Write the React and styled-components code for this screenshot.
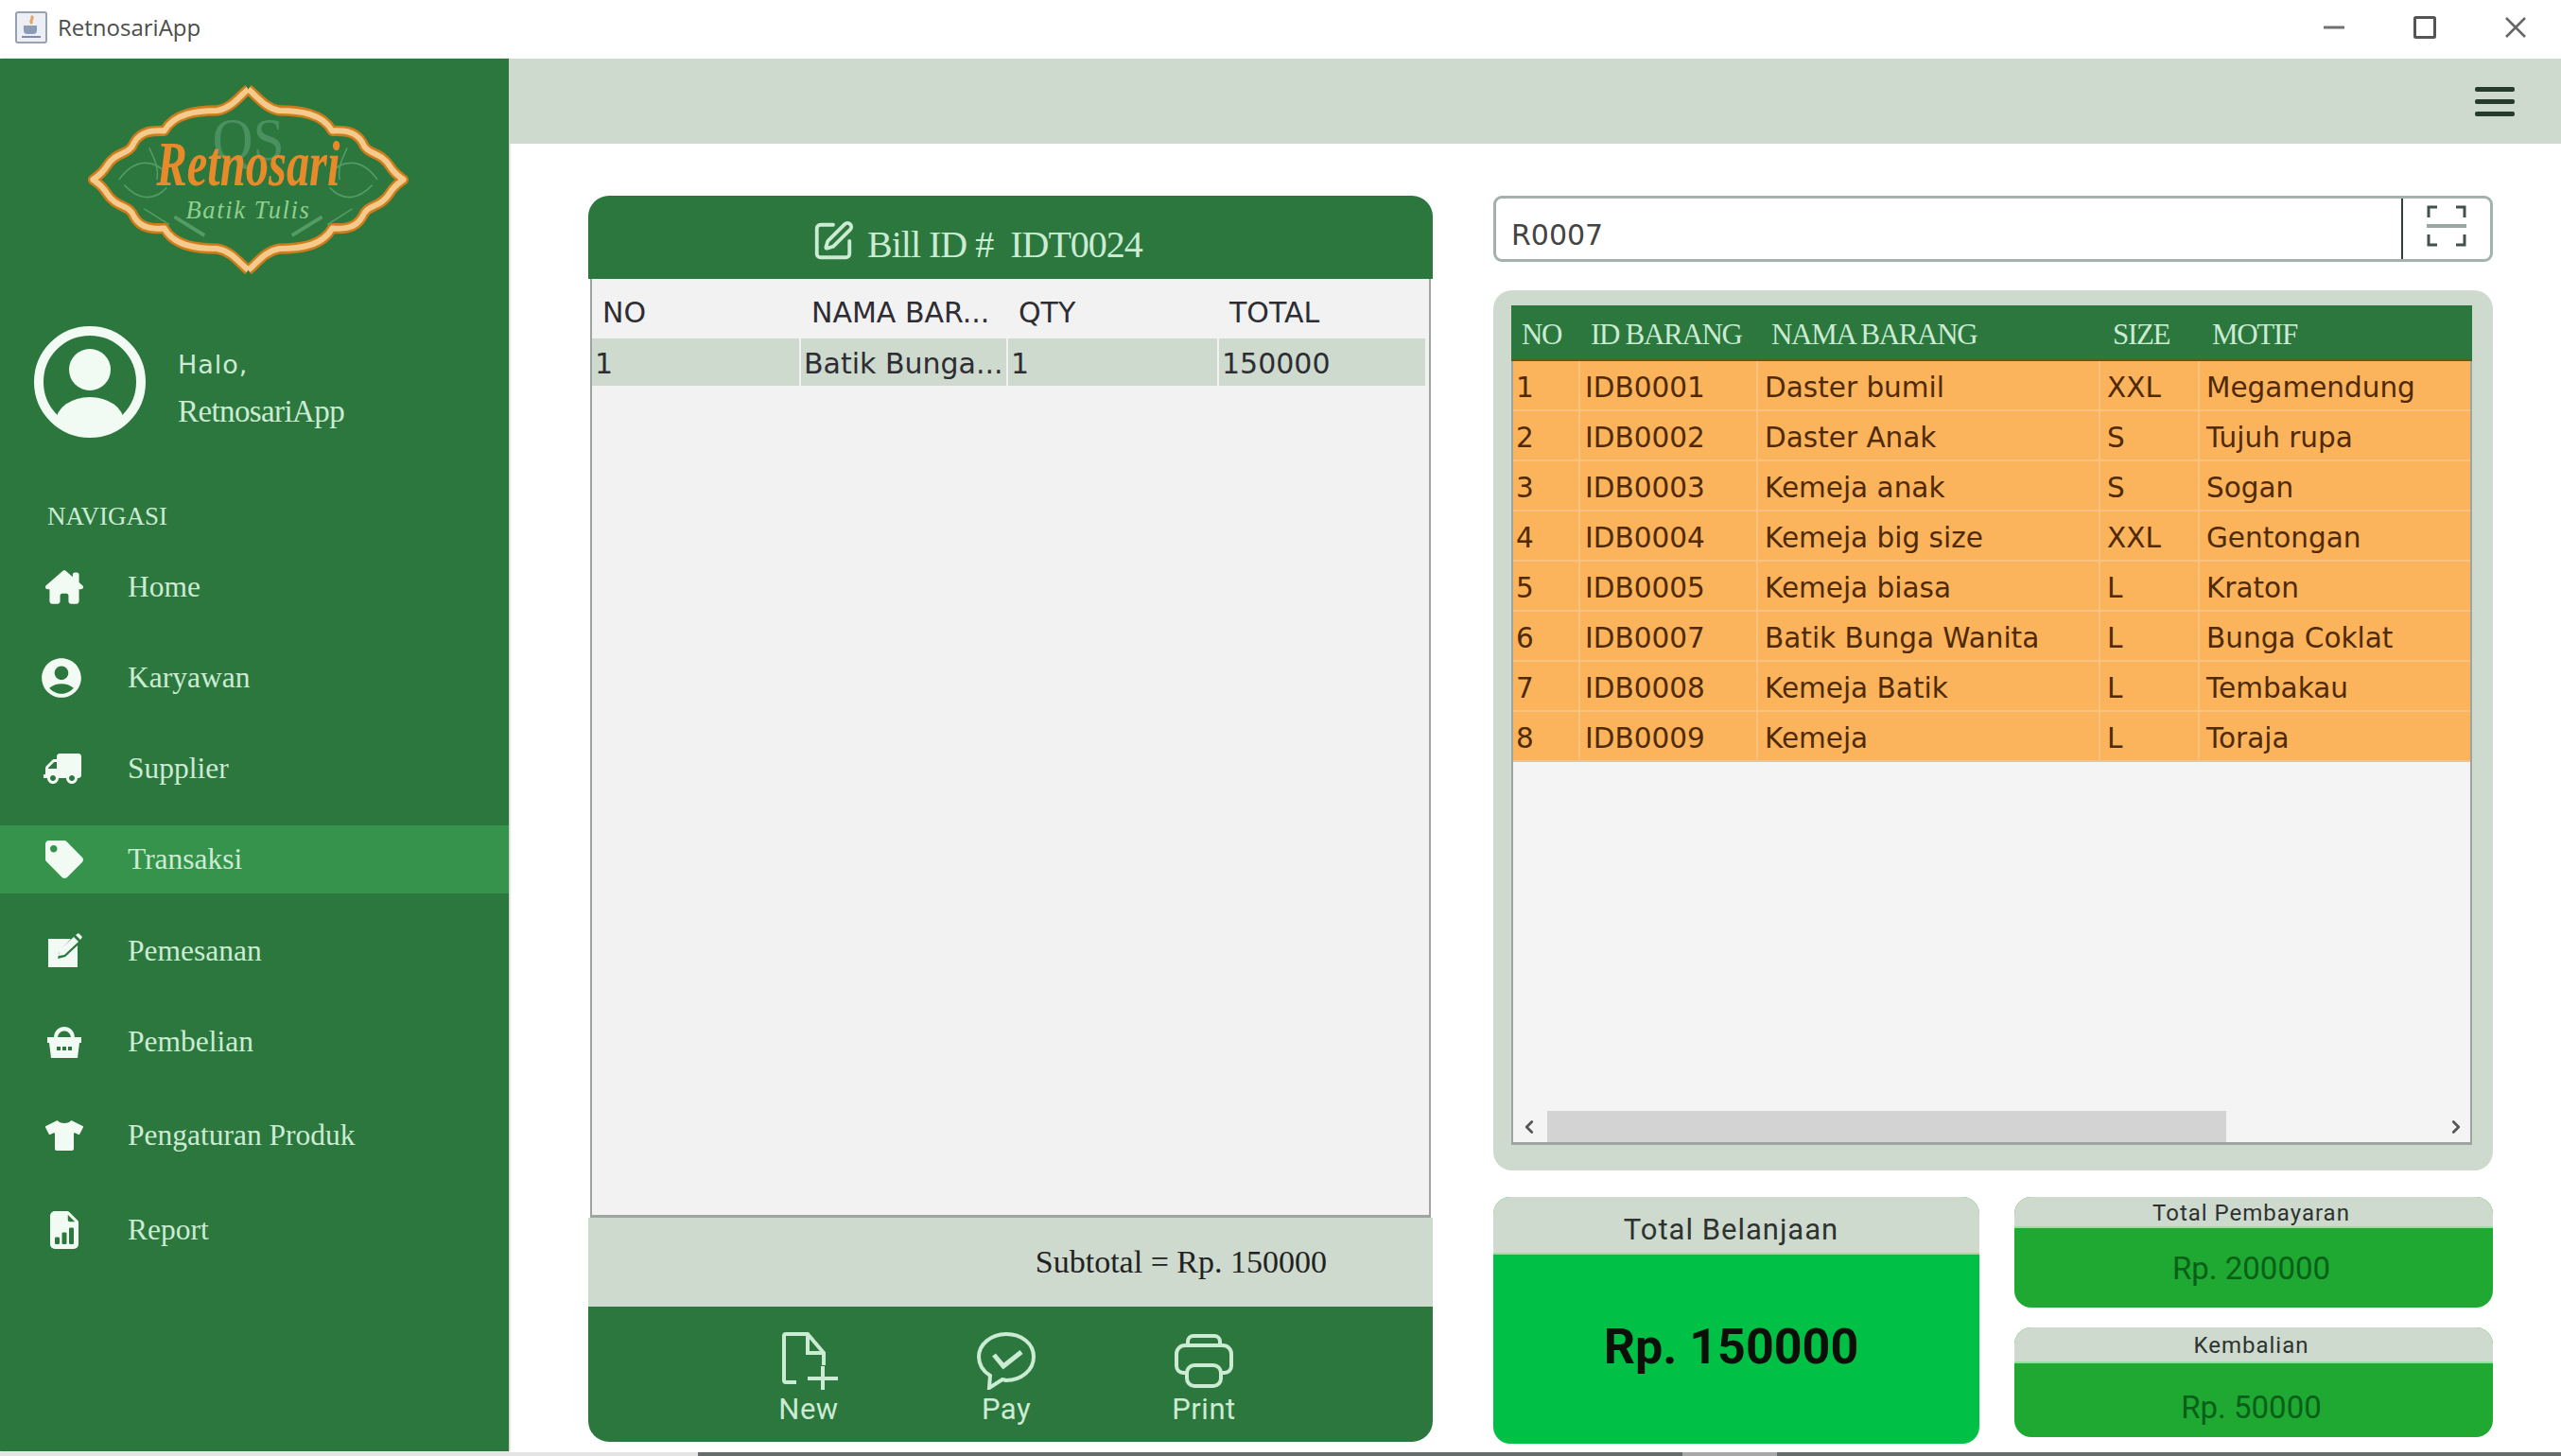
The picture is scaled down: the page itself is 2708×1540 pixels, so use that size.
import React from 'react';
import styled, { createGlobalStyle } from 'styled-components';
import { FaTruck, FaTag, FaTshirt } from 'react-icons/fa';
import { FaHouseChimney } from 'react-icons/fa6';
import { MdAccountCircle } from 'react-icons/md';
import { BsFileEarmarkBarGraphFill } from 'react-icons/bs';
import { SquarePen, ChevronLeft, ChevronRight } from 'lucide-react';

const GREEN = '#2c773e';
const SAGE = '#cddacd';
const MINT = '#cbebd2';
const SERIF = '"Liberation Serif", serif';
const TAHOMA = '"DejaVu Sans", sans-serif';
const LABEL = '"Roboto", sans-serif';

const GlobalStyle = createGlobalStyle`
  html, body { margin: 0; padding: 0; background: #fff; }
  * { box-sizing: border-box; }
`;

const Window = styled.div`
  width: 2708px;
  height: 1540px;
  display: flex;
  flex-direction: column;
  overflow: hidden;
  background: #fff;
  position: relative;
`;

const TitleBar = styled.div`
  height: 62px;
  flex: none;
  display: flex;
  align-items: center;
  padding: 0 36px 5px 16px;
  background: #fff;
`;

const AppTitle = styled.span`
  margin-left: 11px;
  flex: 1;
  font: 24px "Open Sans", sans-serif;
  color: #4c4c4c;
`;

const WinButtons = styled.div`
  display: flex;
  align-items: center;
  gap: 72px;
`;

const Body = styled.div`
  flex: 1;
  display: flex;
  min-height: 0;
`;

const Sidebar = styled.aside`
  width: 538px;
  flex: none;
  height: 1473px;
  background: ${GREEN};
  display: flex;
  flex-direction: column;
  box-shadow: 1px 0 2px rgba(0, 0, 0, 0.25);
`;

const LogoWrap = styled.div`
  padding: 28px 0 0 93px;
  height: 282px;
`;

const Profile = styled.div`
  display: flex;
  align-items: center;
  padding-left: 36px;
  gap: 34px;
  height: 120px;
`;

const ProfileText = styled.div`
  display: flex;
  flex-direction: column;
  gap: 16px;
  padding-top: 16px;
  color: ${MINT};
`;

const Hello = styled.span`
  font: 27px ${TAHOMA};
  letter-spacing: 1px;
`;

const UserName = styled.span`
  font: 33px ${SERIF};
  letter-spacing: -0.6px;
`;

const NavTitle = styled.div`
  margin: 67px 0 0 50px;
  font: 27px ${SERIF};
  color: ${MINT};
`;

const Nav = styled.nav`
  margin-top: 23px;
  display: flex;
  flex-direction: column;
`;

const NavItem = styled.div`
  height: 72px;
  margin-bottom: ${(p) => p.$gap}px;
  display: flex;
  align-items: center;
  padding-left: 48px;
  background: ${(p) => (p.$active ? '#35934c' : 'transparent')};
  color: ${MINT};
  font: 31.5px ${SERIF};

  svg {
    width: 40px;
    height: 40px;
    flex: none;
    color: #f1fbf3;
  }

  span {
    margin-left: 47px;
  }
`;

const TruckIcon = styled(FaTruck)`
  transform: scaleX(-1) translateX(2px);
`;

const AccountIcon = styled(MdAccountCircle)`
  transform: translateX(-3px) scale(1.25);
`;

const Main = styled.main`
  flex: 1;
  display: flex;
  flex-direction: column;
  min-width: 0;
`;

const TopBar = styled.div`
  height: 90px;
  flex: none;
  background: ${SAGE};
  display: flex;
  flex-direction: column;
  align-items: flex-end;
  justify-content: center;
  gap: 8px;
  padding-right: 49px;
`;

const BurgerLine = styled.i`
  display: block;
  width: 42px;
  height: 5px;
  border-radius: 2px;
  background: #263c2b;
`;

const Columns = styled.div`
  display: flex;
  padding: 55px 0 0 84px;
`;

const BillPanel = styled.section`
  width: 893px;
  height: 1318px;
  flex: none;
  display: flex;
  flex-direction: column;
`;

const BillHead = styled.header`
  height: 88px;
  flex: none;
  background: ${GREEN};
  border-radius: 22px 22px 0 0;
  display: flex;
  align-items: center;
  padding: 8px 0 0 236px;
  gap: 13px;
  color: ${MINT};
  font: 40px ${SERIF};
  letter-spacing: -1px;
  white-space: pre;

  span {
    padding-top: 6px;
  }
`;

const BillBody = styled.div`
  flex: 1;
  margin: 0 2px;
  background: #f2f2f2;
  border: solid #9ea5a0;
  border-width: 0 2px 3px;
`;

const BillRow = styled.div`
  display: grid;
  grid-template-columns: 221px 219px 223px 1fr;
  height: ${(p) => p.$h}px;
  align-items: center;
  font: 30px ${TAHOMA};
  color: #2d2d33;
`;

const BillHeader = styled(BillRow)`
  padding-top: 7px;
  span { padding-left: 11px; }
`;

const BillCell = styled.span`
  background: ${SAGE};
  height: 100%;
  display: flex;
  align-items: center;
  padding: 3px 0 0 3px;
  border-right: 2px solid #f2f2f2;
  &:last-child { border-right: 0; margin-right: 4px; }
`;

const SubtotalBar = styled.div`
  height: 94px;
  flex: none;
  background: ${SAGE};
  display: flex;
  align-items: center;
  justify-content: flex-end;
  padding-right: 112px;
  font: 34px ${SERIF};
  color: #222;
`;

const ActionBar = styled.div`
  height: 143px;
  flex: none;
  background: ${GREEN};
  border-radius: 0 0 22px 22px;
  display: flex;
  padding: 26px 0 0 188px;
  gap: 119px;
`;

const Action = styled.button`
  width: 90px;
  background: none;
  border: 0;
  padding: 0;
  display: flex;
  flex-direction: column;
  align-items: center;
  color: ${MINT};
  font: 400 31px ${LABEL};
  line-height: 36px;
  letter-spacing: 0.5px;

  svg {
    width: 64px;
    height: 62px;
    margin-bottom: 3px;
  }
`;

const RightColumn = styled.div`
  margin-left: 64px;
  width: 1057px;
  display: flex;
  flex-direction: column;
`;

const SearchBox = styled.div`
  height: 70px;
  display: flex;
  background: #fff;
  border: 3px solid #a3b3ab;
  border-radius: 9px;
`;

const SearchValue = styled.div`
  flex: 1;
  display: flex;
  align-items: center;
  padding: 13px 0 0 16px;
  font: 30px ${TAHOMA};
  color: #444;
  border-right: 2px solid #33403a;
`;

const ScanButton = styled.div`
  width: 92px;
  display: flex;
  align-items: center;
  justify-content: center;
  padding-bottom: 6px;
`;

const StockPanel = styled.section`
  margin-top: 30px;
  height: 931px;
  padding: 16px 22px 27px 19px;
  background: ${SAGE};
  border-radius: 20px;
`;

const StockTable = styled.div`
  height: 100%;
  background: #f4f4f4;
  border: solid #9ea5a0;
  border-width: 0 2px 3px;
  display: flex;
  flex-direction: column;
`;

const StockHead = styled.div`
  height: 59px;
  flex: none;
  display: grid;
  grid-template-columns: 73px 191px 361px 105px 1fr;
  align-items: center;
  margin: 0 -2px;
  padding-top: 4px;
  background: ${GREEN};
  color: ${MINT};
  font: 31px ${SERIF};
  letter-spacing: -1.3px;
  border-bottom: 2px solid #5c5a1f;
  span { padding-left: 11px; }
`;

const StockRow = styled.div`
  height: 53px;
  flex: none;
  display: grid;
  grid-template-columns: 71px 188px 362px 105px 1fr;
  background: #fbb35c;
  color: #4f2a05;
  font: 29.5px ${TAHOMA};
  border-bottom: 2px solid #f9c27f;
  span {
    display: flex;
    align-items: center;
    padding: 4px 0 0 5px;
    border-right: 2px solid #f9c27f;
    white-space: nowrap;
  }
  span:first-child { padding-left: 3px; }
  span:nth-child(n + 3) { padding-left: 7px; }
  span:last-child { border-right: 0; }
`;

const ScrollTrack = styled.div`
  margin-top: auto;
  height: 33px;
  display: flex;
  align-items: center;
  color: #555;
  padding: 0 4px 0 6px;
`;

const ScrollThumb = styled.div`
  width: 718px;
  height: 33px;
  margin: 0 auto 0 8px;
  background: #d3d3d3;
`;

const Totals = styled.div`
  margin-top: 28px;
  display: flex;
  gap: 37px;
`;

const TotalStack = styled.div`
  flex: 1;
  display: flex;
  flex-direction: column;
  gap: 21px;
`;

const Card = styled.div`
  width: ${(p) => (p.$big ? '514px' : 'auto')};
  height: ${(p) => p.$h}px;
  flex: none;
  display: flex;
  flex-direction: column;
  border-radius: 18px;
  overflow: hidden;
  background: ${(p) => (p.$big ? '#00c146' : '#1fa832')};
`;

const CardHead = styled.div`
  height: ${(p) => p.$h}px;
  flex: none;
  background: ${SAGE};
  border-bottom: 2px solid #8fe39c;
  display: flex;
  align-items: center;
  justify-content: center;
  padding: ${(p) => p.$top}px ${(p) => p.$inset}px 0 0;
  font: ${(p) => p.$size}px ${LABEL};
  letter-spacing: 1px;
  color: #2e3331;
`;

const BigAmount = styled.div`
  flex: 1;
  display: flex;
  align-items: center;
  justify-content: center;
  padding: 0 11px 6px 0;
  font: 700 52px ${LABEL};
  color: #0a0f0a;
`;

const SmallAmount = styled.div`
  flex: 1;
  display: flex;
  align-items: center;
  justify-content: center;
  padding: ${(p) => p.$top}px 5px 0 0;
  font: 33px ${LABEL};
  color: #086018;
`;

const FooterStrip = styled.div`
  position: absolute;
  left: 0;
  right: 0;
  bottom: 0;
  height: 4px;
  background: linear-gradient(
    to right,
    #e4e4e4 738px,
    #666c6b 738px,
    #666c6b 1779px,
    #a8a8a8 1779px,
    #a8a8a8 1879px,
    #666c6b 1879px
  );
`;

const EditBoxIcon = () => (
  <svg viewBox="0 0 40 40" fill="currentColor">
    <path d="M3 7h24L15 20l-2 8 8-2 13-12v23H3z" />
    <path d="M30 5l5 5-15 14-6 1 1-6z" />
    <path d="M32 3l3-2 4 4-2 3z" />
  </svg>
);

const BasketIcon = () => (
  <svg viewBox="0 0 40 40" fill="currentColor">
    <path d="M9 16c0-16 22-16 22 0h-4c0-10-14-10-14 0z" />
    <path fillRule="evenodd" d="M2 15h36v6h-2l-2 16H6L4 21H2zM12 25v4h4v-4zM18 25v4h4v-4zM24 25v4h4v-4z" />
  </svg>
);

const navItems = [
  { label: 'Home', Icon: FaHouseChimney, gap: 24 },
  { label: 'Karyawan', Icon: AccountIcon, gap: 24 },
  { label: 'Supplier', Icon: TruckIcon, gap: 24 },
  { label: 'Transaksi', Icon: FaTag, gap: 25, active: true },
  { label: 'Pemesanan', Icon: EditBoxIcon, gap: 24 },
  { label: 'Pembelian', Icon: BasketIcon, gap: 27 },
  { label: 'Pengaturan Produk', Icon: FaTshirt, gap: 28 },
  { label: 'Report', Icon: BsFileEarmarkBarGraphFill, gap: 0 },
];

const stock = [
  ['1', 'IDB0001', 'Daster bumil', 'XXL', 'Megamendung'],
  ['2', 'IDB0002', 'Daster Anak', 'S', 'Tujuh rupa'],
  ['3', 'IDB0003', 'Kemeja anak', 'S', 'Sogan'],
  ['4', 'IDB0004', 'Kemeja big size', 'XXL', 'Gentongan'],
  ['5', 'IDB0005', 'Kemeja biasa', 'L', 'Kraton'],
  ['6', 'IDB0007', 'Batik Bunga Wanita', 'L', 'Bunga Coklat'],
  ['7', 'IDB0008', 'Kemeja Batik', 'L', 'Tembakau'],
  ['8', 'IDB0009', 'Kemeja', 'L', 'Toraja'],
];

const JavaIcon = () => (
  <svg width="34" height="34" viewBox="0 0 34 34">
    <rect x="1" y="1" width="32" height="32" rx="2" fill="#eceff5" stroke="#98a2ae" strokeWidth="2" />
    <path d="M17 5c4 3-3 4 1 8" fill="none" stroke="#e8a465" strokeWidth="3" />
    <path d="M9 15h14v5a4 4 0 0 1-4 4h-6a4 4 0 0 1-4-4z" fill="#8d9cb5" />
    <path d="M7 27h20" stroke="#7c8dab" strokeWidth="2" />
  </svg>
);

const Logo = () => {
  const left =
    'M317 0 C300 12 285 35 255 40 C215 40 170 45 150 78 C135 78 105 75 90 100 C80 125 55 115 35 145 C25 160 15 165 8 170' +
    ' C15 175 25 180 35 195 C55 225 80 215 90 240 C105 265 135 262 150 262 C170 295 215 300 255 300 C285 305 300 328 317 340';
  const right =
    'M317 0 C334 12 349 35 379 40 C419 40 464 45 484 78 C499 78 529 75 544 100 C554 125 579 115 599 145 C609 160 619 165 626 170' +
    ' C619 175 609 180 599 195 C579 225 554 215 544 240 C529 265 499 262 484 262 C464 295 419 300 379 300 C349 305 334 328 317 340';
  return (
    <svg width="339" height="200" viewBox="-2 -8 638 356" preserveAspectRatio="none">
      <g fill="none" strokeLinejoin="round">
        <path d={left} stroke="#cf7d1c" strokeWidth="20" />
        <path d={right} stroke="#cf7d1c" strokeWidth="20" />
        <path d={left} stroke="#f4cb8c" strokeWidth="11" />
        <path d={right} stroke="#f4cb8c" strokeWidth="11" />
        <g stroke="#5fa470" strokeWidth="3" opacity="0.8">
          <path d="M60 170c30-40 70-40 95-10M70 180c30 30 60 30 85 5M120 110c10 20 20 40 15 60M110 225l50 30" />
          <path d="M574 170c-30-40-70-40-95-10M564 180c-30 30-60 30-85 5M514 110c-10 20-20 40-15 60M524 225l-50 30" />
          <path d="M170 240l60 35M464 240l-60 35" strokeWidth="7" />
        </g>
      </g>
      <text x="317" y="132" textAnchor="middle" fontFamily={SERIF} fontSize="112" fill="#4a9060">QS</text>
      <text x="317" y="180" textAnchor="middle" fontFamily={SERIF} fontStyle="italic" fontWeight="700" fontSize="122" textLength="365" lengthAdjust="spacingAndGlyphs" fill="#e98a2a">Retnosari</text>
      <text x="317" y="243" textAnchor="middle" fontFamily={SERIF} fontStyle="italic" fontSize="50" fill="#8fcf90" letterSpacing="3">Batik Tulis</text>
    </svg>
  );
};

const Avatar = () => (
  <svg width="118" height="120" viewBox="0 0 118 120">
    <defs>
      <clipPath id="avatarClip">
        <circle cx="59" cy="60" r="52" />
      </clipPath>
    </defs>
    <circle cx="59" cy="60" r="54" fill="none" stroke="#f1fbf3" strokeWidth="10" />
    <circle cx="59" cy="47" r="22" fill="#f1fbf3" />
    <ellipse cx="59" cy="102" rx="36" ry="26" fill="#f1fbf3" clipPath="url(#avatarClip)" />
  </svg>
);

const NewIcon = () => (
  <svg viewBox="0 0 64 62" fill="none" stroke="currentColor" strokeWidth="4">
    <path d="M19 54H8a2 2 0 0 1-2-2V5a2 2 0 0 1 2-2h23l17 20v13" />
    <path d="M31 3v20h17" />
    <path d="M47 37v25M31 50h32" />
  </svg>
);

const PayIcon = () => (
  <svg viewBox="0 0 64 62" fill="none" stroke="currentColor" strokeWidth="4">
    <path d="M32 3C16 3 3 14 3 27c0 8 4 15 12 20l-1 13 14-9c1 0 3 1 4 1 16 0 29-11 29-25S48 3 32 3z" />
    <path d="M19 25l10 12 19-15" strokeWidth="5" />
  </svg>
);

const PrintIcon = () => (
  <svg viewBox="0 0 64 62" fill="none" stroke="currentColor" strokeWidth="4">
    <path d="M13 44H10a7 7 0 0 1-7-7V24a9 9 0 0 1 9-9h40a9 9 0 0 1 9 9v13a7 7 0 0 1-7 7h-3" />
    <path d="M15 15V11a6 6 0 0 1 6-6h22a6 6 0 0 1 6 6v4" />
    <rect x="14" y="36" width="36" height="22" rx="8" />
  </svg>
);

const ScanIcon = () => (
  <svg width="42" height="46" viewBox="0 0 42 46" fill="none" stroke="#44514a" strokeWidth="3">
    <path d="M2 14V3h9M31 3h9v11M2 32v11h9M31 43h9V32" />
    <path d="M0 23h42" stroke="#9aa6a0" strokeWidth="4" />
  </svg>
);

const MinIcon = () => (
  <svg width="24" height="24" viewBox="0 0 24 24"><path d="M1 12h22" stroke="#707070" strokeWidth="3" /></svg>
);

const MaxIcon = () => (
  <svg width="24" height="24" viewBox="0 0 24 24"><rect x="1.5" y="1.5" width="21" height="21" rx="1" fill="none" stroke="#555" strokeWidth="3" /></svg>
);

const CloseIcon = () => (
  <svg width="24" height="24" viewBox="0 0 24 24"><path d="M2 2l20 20M22 2L2 22" stroke="#666" strokeWidth="2.5" /></svg>
);

const App = () => (
  <Window>
    <GlobalStyle />
    <TitleBar>
      <JavaIcon />
      <AppTitle>RetnosariApp</AppTitle>
      <WinButtons>
        <MinIcon />
        <MaxIcon />
        <CloseIcon />
      </WinButtons>
    </TitleBar>
    <Body>
      <Sidebar>
        <LogoWrap>
          <Logo />
        </LogoWrap>
        <Profile>
          <Avatar />
          <ProfileText>
            <Hello>Halo,</Hello>
            <UserName>RetnosariApp</UserName>
          </ProfileText>
        </Profile>
        <NavTitle>NAVIGASI</NavTitle>
        <Nav>
          {navItems.map(({ label, Icon, gap, active }) => (
            <NavItem key={label} $gap={gap} $active={active}>
              <Icon />
              <span>{label}</span>
            </NavItem>
          ))}
        </Nav>
      </Sidebar>
      <Main>
        <TopBar>
          <BurgerLine />
          <BurgerLine />
          <BurgerLine />
        </TopBar>
        <Columns>
          <BillPanel>
            <BillHead>
              <SquarePen size={46} strokeWidth={2} />
              <span>Bill ID #  IDT0024</span>
            </BillHead>
            <BillBody>
              <BillHeader $h={63}>
                <span>NO</span>
                <span>NAMA BAR...</span>
                <span>QTY</span>
                <span>TOTAL</span>
              </BillHeader>
              <BillRow $h={50}>
                <BillCell>1</BillCell>
                <BillCell>Batik Bunga...</BillCell>
                <BillCell>1</BillCell>
                <BillCell>150000</BillCell>
              </BillRow>
            </BillBody>
            <SubtotalBar>Subtotal = Rp. 150000</SubtotalBar>
            <ActionBar>
              <Action><NewIcon />New</Action>
              <Action><PayIcon />Pay</Action>
              <Action><PrintIcon />Print</Action>
            </ActionBar>
          </BillPanel>
          <RightColumn>
            <SearchBox>
              <SearchValue>R0007</SearchValue>
              <ScanButton><ScanIcon /></ScanButton>
            </SearchBox>
            <StockPanel>
              <StockTable>
                <StockHead>
                  <span>NO</span>
                  <span>ID BARANG</span>
                  <span>NAMA BARANG</span>
                  <span>SIZE</span>
                  <span>MOTIF</span>
                </StockHead>
                {stock.map((row) => (
                  <StockRow key={row[0]}>
                    {row.map((cell, i) => (
                      <span key={i}>{cell}</span>
                    ))}
                  </StockRow>
                ))}
                <ScrollTrack>
                  <ChevronLeft size={22} strokeWidth={3} />
                  <ScrollThumb />
                  <ChevronRight size={22} strokeWidth={3} />
                </ScrollTrack>
              </StockTable>
            </StockPanel>
            <Totals>
              <Card $big $h={261}>
                <CardHead $h={61} $size={31} $top={10} $inset={11}>Total Belanjaan</CardHead>
                <BigAmount>Rp. 150000</BigAmount>
              </Card>
              <TotalStack>
                <Card $h={117}>
                  <CardHead $h={33} $size={24} $top={2} $inset={5}>Total Pembayaran</CardHead>
                  <SmallAmount $top={0}>Rp. 200000</SmallAmount>
                </Card>
                <Card $h={116}>
                  <CardHead $h={38} $size={24} $top={2} $inset={5}>Kembalian</CardHead>
                  <SmallAmount $top={14}>Rp. 50000</SmallAmount>
                </Card>
              </TotalStack>
            </Totals>
          </RightColumn>
        </Columns>
      </Main>
    </Body>
    <FooterStrip />
  </Window>
);

export default App;
